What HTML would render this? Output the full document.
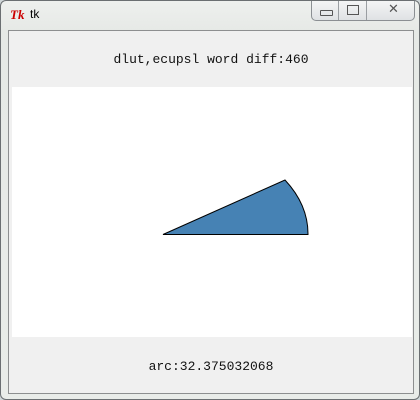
<!DOCTYPE html>
<html><head><style>
body{margin:0;width:420px;height:400px;overflow:hidden;background:#cfd6d8;font-family:"Liberation Sans",sans-serif}
.win{position:absolute;left:0;top:0;width:418px;height:398px;border:1px solid #6b6f72;border-radius:6px;background:linear-gradient(#eef0ee,#e6e9e6 30px,#e9ece9)}
.client{position:absolute;left:7px;top:29px;width:404px;height:362px;border:1px solid #8d8f90;background:#f0f0f0}
.canvas{position:absolute;left:3px;top:56px;width:400px;height:250px;background:#fff}
.t{position:absolute;left:0;width:404px;text-align:center;font-family:"Liberation Mono",monospace;font-size:13px;color:#111}
.btns{position:absolute;left:310px;top:0;width:102px;height:19px;border:1px solid #8b8f93;border-top:none;border-radius:0 0 5px 5px;background:linear-gradient(#f4f5f5,#dfe2e4)}
.btns div{position:absolute;top:0;height:19px;border-left:1px solid #9a9ea2}
</style></head><body>
<div class="win">
<span style="position:absolute;left:9px;top:6px;color:#c00;font:italic bold 13px 'Liberation Serif',serif">Tk</span>
<span style="position:absolute;left:29px;top:6px;font-size:12px;color:#000">tk</span>
<div class="btns"><div style="left:26px"></div><div style="left:54px"></div>
<span style="position:absolute;left:8px;top:9px;width:11px;height:4px;border:1px solid #555;border-radius:1px"></span>
<span style="position:absolute;left:35px;top:4px;width:10px;height:8px;border:1px solid #555"></span>
<span style="position:absolute;left:76px;top:0px;font-size:13px;color:#555">✕</span></div>
<div class="client">
<div class="t" style="top:21px">dlut,ecupsl word diff:460</div>
<div class="canvas"></div>
<div class="t" style="top:328px">arc:32.375032068</div>
</div>
</div>
<svg style="position:absolute;left:0;top:0" width="420" height="400">
<path d="M163 234.5 L285 180 A145 100 0 0 1 308 234.5 Z" fill="#4682b4" stroke="#000" stroke-width="1"/>
</svg>
</body></html>
